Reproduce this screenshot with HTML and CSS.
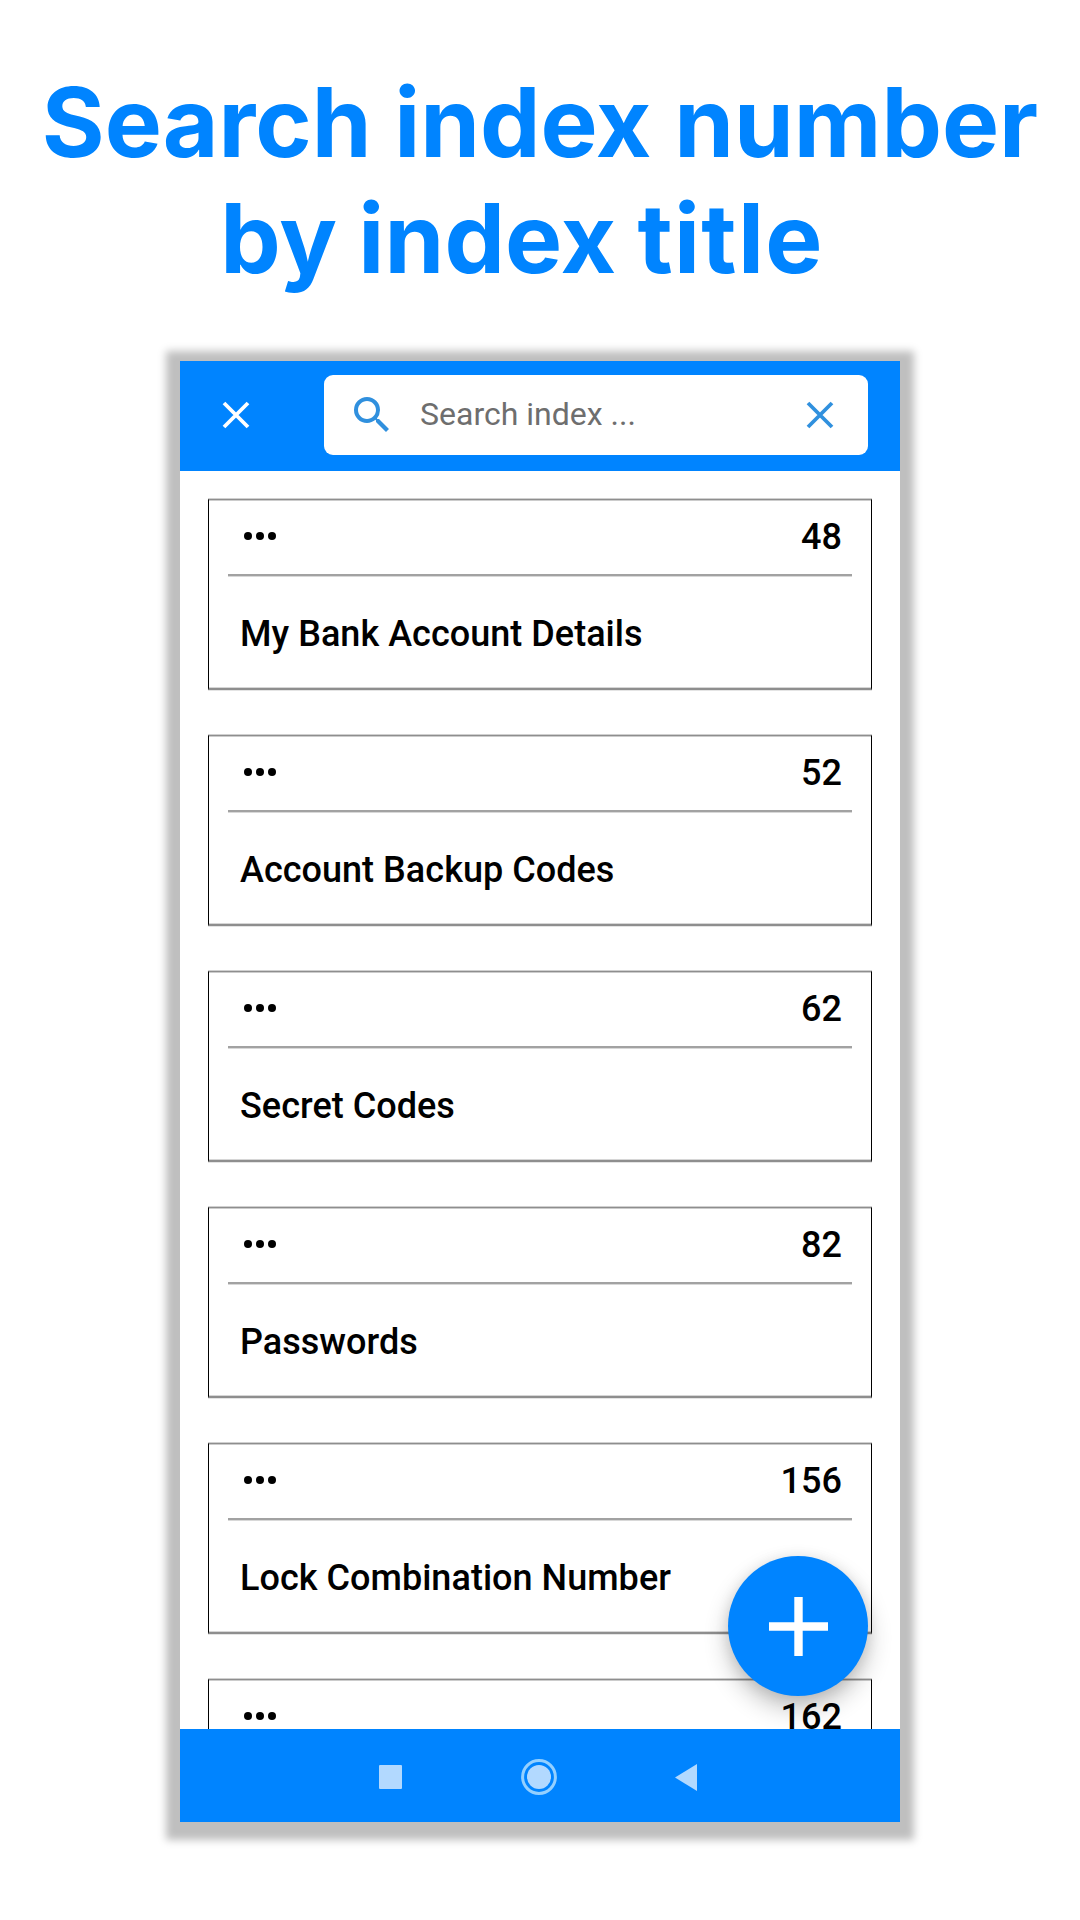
FILE: index.html
```html
<!DOCTYPE html>
<html lang="en">
<head>
<meta charset="utf-8">
<title>Search index</title>
<link rel="stylesheet" href="styles.css">
</head>
<body>
<h1 class="headline"><span class="line">Search index number</span><span class="line line-second">by index <span class="wide">title</span></span></h1>
<main class="phone">
  <header class="topbar">
    <svg class="close" viewBox="0 0 28 28"><path d="M2 2L26 26M26 2L2 26"/></svg>
    <div class="search">
      <svg class="magnifier" viewBox="0 0 24 24"><path d="M15.5 14h-.79l-.28-.27A6.47 6.47 0 0 0 16 9.5 6.5 6.5 0 1 0 9.5 16c1.61 0 3.09-.59 4.23-1.57l.27.28v.79l5 4.99L20.49 19l-4.99-5zm-6 0C7.01 14 5 11.99 5 9.5S7.01 5 9.5 5 14 7.01 14 9.5 11.99 14 9.5 14z"/></svg>
      <span class="placeholder">Search index ...</span>
      <svg class="close clear" viewBox="0 0 28 28"><path d="M2 2L26 26M26 2L2 26"/></svg>
    </div>
  </header>
  <section class="list">
    <article class="card"><div class="card-head"><svg class="dots" viewBox="0 0 32 8"><circle cx="4" cy="4" r="4"/><circle cx="16" cy="4" r="4"/><circle cx="28" cy="4" r="4"/></svg><span class="number">48</span></div><div class="card-title">My Bank Account Details</div></article>
    <article class="card"><div class="card-head"><svg class="dots" viewBox="0 0 32 8"><circle cx="4" cy="4" r="4"/><circle cx="16" cy="4" r="4"/><circle cx="28" cy="4" r="4"/></svg><span class="number">52</span></div><div class="card-title">Account Backup Codes</div></article>
    <article class="card"><div class="card-head"><svg class="dots" viewBox="0 0 32 8"><circle cx="4" cy="4" r="4"/><circle cx="16" cy="4" r="4"/><circle cx="28" cy="4" r="4"/></svg><span class="number">62</span></div><div class="card-title">Secret Codes</div></article>
    <article class="card"><div class="card-head"><svg class="dots" viewBox="0 0 32 8"><circle cx="4" cy="4" r="4"/><circle cx="16" cy="4" r="4"/><circle cx="28" cy="4" r="4"/></svg><span class="number">82</span></div><div class="card-title">Passwords</div></article>
    <article class="card"><div class="card-head"><svg class="dots" viewBox="0 0 32 8"><circle cx="4" cy="4" r="4"/><circle cx="16" cy="4" r="4"/><circle cx="28" cy="4" r="4"/></svg><span class="number">156</span></div><div class="card-title">Lock Combination Number</div></article>
    <article class="card"><div class="card-head"><svg class="dots" viewBox="0 0 32 8"><circle cx="4" cy="4" r="4"/><circle cx="16" cy="4" r="4"/><circle cx="28" cy="4" r="4"/></svg><span class="number">162</span></div></article>
    <div class="fab"><svg class="plus" viewBox="0 0 59 59"><path d="M29.5 0V59M0 29.5H59"/></svg></div>
  </section>
  <nav class="navbar">
    <svg class="nav-square" viewBox="0 0 23 24"><rect width="23" height="24" rx="1"/></svg>
    <svg class="nav-home" viewBox="0 0 36 36"><circle class="ring" cx="18" cy="18" r="16.4"/><circle cx="18" cy="18" r="12"/></svg>
    <svg class="nav-back" viewBox="0 0 22 27"><path d="M22 0V27L0 13.5Z"/></svg>
  </nav>
</main>
</body>
</html>
```
FILE: styles.css
```css
* { box-sizing: border-box; }

body {
  margin: 0;
  width: 1080px;
  height: 1920px;
  background: #fff;
  font-family: Roboto, sans-serif;
  overflow: hidden;
  display: flex;
  flex-direction: column;
  align-items: center;
}

svg { display: block; flex: none; }

.headline {
  width: 100%;
  height: 361px;
  margin: 0;
  padding-top: 64px;
  font: 700 96px/116px Inter, sans-serif;
  color: #0084ff;
  text-align: center;
}

.line { display: block; white-space: nowrap; }
.line-second { padding-right: 36px; letter-spacing: 0.2px; word-spacing: -2px; }
.wide { letter-spacing: 1.3px; }

.phone {
  width: 720px;
  height: 1461px;
  display: flex;
  flex-direction: column;
  background: #fff;
  box-shadow: 0 4px 8px 14px #bfbfbf;
}

.topbar {
  height: 110px;
  flex: none;
  display: flex;
  align-items: center;
  justify-content: space-between;
  padding: 0 32px 2px 42px;
  background: #0084ff;
}

.close {
  width: 28px;
  height: 28px;
  fill: none;
  stroke: #fff;
  stroke-width: 3.8;
}

.search {
  width: 544px;
  height: 80px;
  display: flex;
  align-items: center;
  padding: 0 34px 0 24px;
  border-radius: 9px;
  background: #fff;
}

.magnifier { width: 48px; height: 48px; fill: #3090de; }
.placeholder { flex: 1; padding: 0 0 2px 24px; font-size: 32px; line-height: 40px; color: #6e6e6e; }
.clear { stroke: #3090de; }

.list {
  position: relative;
  flex: none;
  height: 1258px;
  overflow: hidden;
  display: flex;
  flex-direction: column;
  gap: 45px;
  padding: 28px 28px 0;
}

.card {
  flex: none;
  height: 191px;
  padding: 0 19px;
  border: 1px solid #000;
  border-top-color: #8e8e8e;
  border-bottom: 2px solid #8e8e8e;
  box-shadow: 0 -1px #d0d0d0, 0 1px #e4e4e4, inset 0 1px #ccc, inset 0 -1px #d6d6d6;
  font-size: 36px;
  font-weight: 500;
  color: #000;
}

.card-head {
  height: 76px;
  display: flex;
  align-items: center;
  justify-content: space-between;
  padding: 0 10px 2px 16px;
  border-bottom: 2px solid #a2a2a2;
  box-shadow: 0 1px #d8d8d8;
}

.dots { width: 32px; height: 8px; fill: #000; }
.number { padding-top: 2px; }
.card-title { padding: 37px 0 0 12px; line-height: 42px; letter-spacing: 0.03px; white-space: nowrap; }

.fab {
  position: absolute;
  right: 32px;
  bottom: 33px;
  width: 140px;
  height: 140px;
  display: grid;
  place-items: center;
  border-radius: 50%;
  background: #0084ff;
  box-shadow: 0 12px 24px rgba(0, 0, 0, .24), 0 2px 14px rgba(0, 0, 0, .1);
}

.plus { width: 59px; height: 59px; stroke: #fff; stroke-width: 8.4; }

.navbar {
  flex: 1;
  display: flex;
  align-items: center;
  padding: 3px 0 0 199px;
  background: #0084ff;
  fill: #b2d9ff;
}

.nav-square { width: 23px; height: 24px; }
.nav-home { width: 36px; height: 36px; margin-left: 119px; }
.nav-back { width: 22px; height: 27px; margin-left: 118px; }
.ring { fill: none; stroke: #94d0ff; stroke-width: 3; }
```
